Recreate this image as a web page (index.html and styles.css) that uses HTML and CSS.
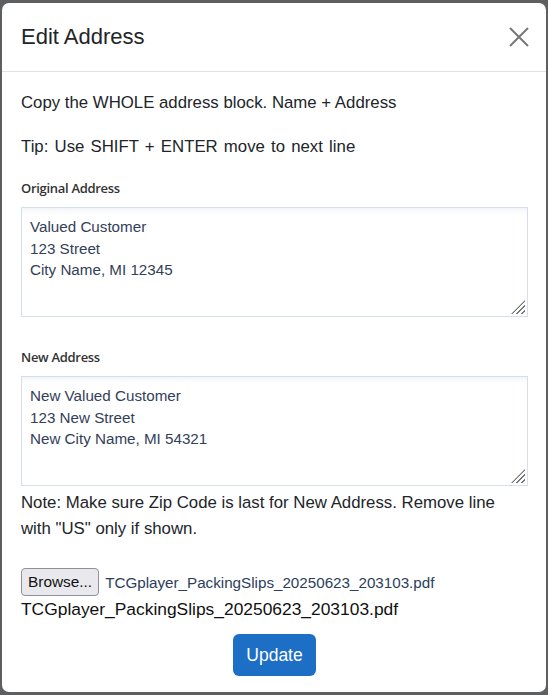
FILE: index.html
```html
<html>
<head>
<link rel="stylesheet" href="styles.css">
</head>
<body>
<div class="modal">
  <header class="modal-head">
    <h1>Edit Address</h1>
    <span class="close">
      <svg width="20" height="20" viewBox="0 0 20 20"><path d="M1 1L19 19M19 1L1 19" stroke="#777" stroke-width="2" fill="none"/></svg>
    </span>
  </header>
  <section class="modal-body">
    <p>Copy the WHOLE address block. Name + Address</p>
    <p class="tip">Tip: Use SHIFT + ENTER move to next line</p>
    <label>Original Address</label>
    <div class="area">Valued Customer<br>123 Street<br>City Name, MI 12345<span class="grip"></span></div>
    <label class="second">New Address</label>
    <div class="area">New Valued Customer<br>123 New Street<br>New City Name, MI 54321<span class="grip"></span></div>
    <p class="note">Note: Make sure Zip Code is last for New Address. Remove line with "US" only if shown.</p>
    <div class="file">
      <span class="browse">Browse...</span>
      <span class="fname">TCGplayer_PackingSlips_20250623_203103.pdf</span>
    </div>
    <div class="chosen">TCGplayer_PackingSlips_20250623_203103.pdf</div>
    <div class="actions"><button class="update">Update</button></div>
  </section>
</div>
</body>
</html>
```

FILE: styles.css
```css
body {
    margin: 0;
    background-color: #5d5f60;
    font-family: "Liberation Sans", Arial, sans-serif;
    color: #212529;
}
.modal {
    margin: 3px 2px 0;
    width: 544px;
    height: 689px;
    box-sizing: border-box;
    background-color: #fff;
    border-radius: 7px;
    overflow: hidden;
}
.modal-head {
    display: flex;
    align-items: center;
    justify-content: space-between;
    height: 68px;
    padding: 0 17px 0 19px;
    border-bottom: 1px #dee2e6 solid;
}
.modal-head h1 {
    margin: 0;
    font-size: 22px;
    font-weight: normal;
    color: #212529;
}
.close {
    display: block;
    width: 20px;
    height: 20px;
}
.modal-body {
    padding: 19px 18px 0 19px;
}
.modal-body p {
    margin: 0 0 20px;
    font-size: 16.8px;
    line-height: 24px;
}
.modal-body p.tip {
    word-spacing: 1.5px;
}
label {
    display: block;
    margin-bottom: 10px;
    font-family: "Open Sans", sans-serif;
    font-size: 13px;
    font-weight: 600;
    line-height: 18px;
    letter-spacing: -0.3px;
    color: #333;
}
label.second {
    margin-top: 31px;
}
.area {
    position: relative;
    height: 110px;
    box-sizing: border-box;
    padding: 8px 8px;
    font-size: 15.2px;
    line-height: 21.5px;
    color: #33405a;
    border: 1px #d7dfea solid;
    box-shadow: inset 0 6px 6px -4px #eef1f5;
}
.grip {
    position: absolute;
    right: 2px;
    bottom: 2px;
    width: 14px;
    height: 14px;
    background: repeating-linear-gradient(135deg, transparent 0 2.2px, #777 2.2px 3.6px);
    clip-path: polygon(100% 0, 100% 100%, 0 100%);
}
.modal-body p.note {
    margin: 4px 0 26px;
    line-height: 26px;
}
.file {
    display: flex;
    align-items: center;
    height: 28px;
}
.browse {
    box-sizing: border-box;
    height: 28px;
    padding: 0 6px;
    line-height: 26px;
    font-size: 15.4px;
    color: #111;
    background-color: #e9e9ed;
    border: 1px #8f8f9d solid;
    border-radius: 4px;
}
.fname {
    margin-left: 6px;
    font-size: 15.2px;
    color: #2b3e5c;
}
.chosen {
    margin-top: 3px;
    font-size: 17.4px;
    line-height: 20px;
    color: #111;
}
.actions {
    margin-top: 15px;
    text-align: center;
}
.update {
    width: 83px;
    height: 42px;
    font-family: "Liberation Sans", Arial, sans-serif;
    font-size: 17.5px;
    color: #fff;
    background-color: #1d6ec5;
    border: 0;
    border-radius: 6px;
}
```
